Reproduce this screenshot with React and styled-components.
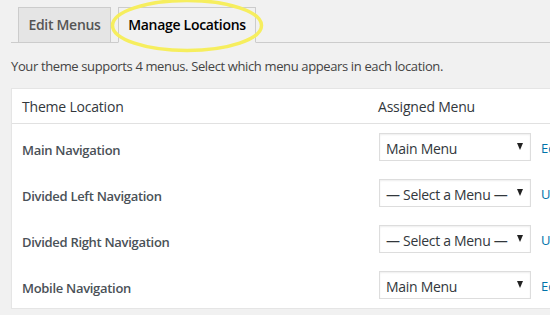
import styled, { createGlobalStyle } from "styled-components";

const GlobalStyle = createGlobalStyle`
    html, body {
        margin: 0;
        padding: 0;
        background-color: #f1f1f1;
        overflow: hidden;
    }
    body {
        font-family: "Open Sans", "Noto Sans", sans-serif;
        color: #444;
    }
`;

const Wrap = styled.div`
    position: relative;
    padding-left: 11px;
    width: 700px;
`;

const TabBar = styled.div`
    display: flex;
    align-items: flex-end;
    gap: 7px;
    padding: 7px 0 0 7px;
    border-bottom: 1px solid #ccc;
`;

const Tab = styled.div`
    box-sizing: border-box;
    width: ${p => p.$width}px;
    padding: 5px 0;
    border: 1px solid #ccc;
    border-bottom: ${p => (p.$active ? "1px solid #f1f1f1" : "none")};
    margin-bottom: ${p => (p.$active ? "-1px" : "0")};
    background-color: ${p => (p.$active ? "#f1f1f1" : "#e5e5e5")};
    color: ${p => (p.$active ? "#000" : "#555")};
    font-size: 14px;
    font-weight: 600;
    line-height: 24px;
    text-align: center;
    white-space: nowrap;
    letter-spacing: -0.3px;
`;

const Highlight = styled.svg`
    position: absolute;
    left: 110px;
    top: -2px;
    width: 154px;
    height: 55px;
    pointer-events: none;
`;

const Intro = styled.p`
    margin: 14px 0 13px;
    font-size: 13px;
    line-height: 18px;
    color: #444;
    letter-spacing: -0.37px;
`;

const Table = styled.div`
    width: 640px;
    background-color: #fff;
    border: 1px solid #e5e5e5;
    box-shadow: 0 1px 1px rgba(0, 0, 0, 0.04);
`;

const Row = styled.div`
    display: grid;
    grid-template-columns: 356px 1fr;
    align-items: center;
    height: ${p => (p.$head ? "34px" : "46px")};
    border-bottom: ${p => (p.$head ? "1px solid #e1e1e1" : "none")};
`;

const HeadCell = styled.div`
    padding: 1px 0 0 10px;
    font-size: 14px;
    color: #32373c;
    letter-spacing: -0.2px;
`;

const Label = styled.div`
    padding: 6px 0 0 10px;
    font-size: 13px;
    font-weight: 600;
    color: #4a5157;
    letter-spacing: -0.3px;
`;

const MenuCell = styled.div`
    display: flex;
    align-items: center;
    padding-left: 11px;
`;

const Select = styled.div`
    box-sizing: border-box;
    display: flex;
    align-items: center;
    justify-content: space-between;
    width: 152px;
    height: 28px;
    padding: 2px 7px 0 6px;
    border: 1px solid #ddd;
    box-shadow: inset 0 1px 2px rgba(0, 0, 0, 0.07);
    font-size: 14px;
    color: #32373c;
    white-space: nowrap;
    letter-spacing: -0.3px;
`;

const Arrow = styled.span`
    width: 0;
    height: 0;
    border-left: 3.5px solid transparent;
    border-right: 3.5px solid transparent;
    border-top: 7px solid #222;
    margin-top: -4px;
`;

const Action = styled.a`
    margin-left: 10px;
    padding-top: 2px;
    font-size: 13px;
    color: #0073aa;
    text-decoration: none;
    white-space: nowrap;
`;

const locations = [
    { name: "Main Navigation", menu: "Main Menu", action: "Edit" },
    { name: "Divided Left Navigation", menu: "— Select a Menu —", action: "Use new menu" },
    { name: "Divided Right Navigation", menu: "— Select a Menu —", action: "Use new menu" },
    { name: "Mobile Navigation", menu: "Main Menu", action: "Edit" },
];

const App = () => {
    return (
        <Wrap>
            <GlobalStyle />
            <TabBar>
                <Tab $width={93}>Edit Menus</Tab>
                <Tab $width={138} $active>Manage Locations</Tab>
            </TabBar>
            <Highlight viewBox="0 0 154 55">
                <ellipse cx="77" cy="27.5" rx="74.5" ry="25" fill="none" stroke="#f6ee5e" strokeWidth="3.5" />
            </Highlight>
            <Intro>Your theme supports 4 menus. Select which menu appears in each location.</Intro>
            <Table>
                <Row $head>
                    <HeadCell>Theme Location</HeadCell>
                    <HeadCell>Assigned Menu</HeadCell>
                </Row>
                {locations.map(loc => (
                    <Row key={loc.name}>
                        <Label>{loc.name}</Label>
                        <MenuCell>
                            <Select>
                                <span>{loc.menu}</span>
                                <Arrow />
                            </Select>
                            <Action href="#">{loc.action}</Action>
                        </MenuCell>
                    </Row>
                ))}
            </Table>
        </Wrap>
    );
};

export default App;
